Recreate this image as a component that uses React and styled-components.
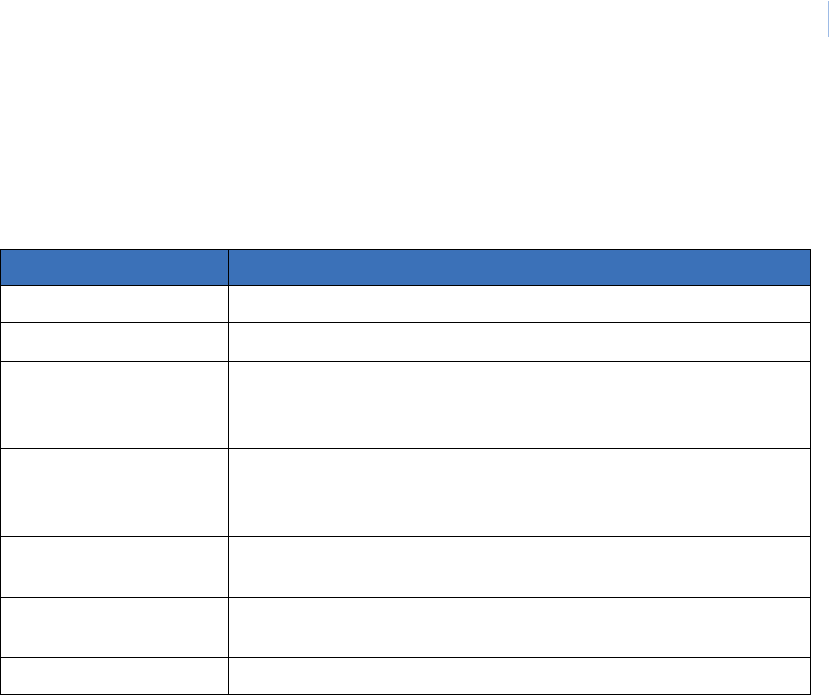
import React from "react";
import styled, { createGlobalStyle } from "styled-components";

const Global = createGlobalStyle`
  html, body { margin: 0; padding: 0; background: #ffffff; }
  body { font-family: "Liberation Sans", Arial, sans-serif; font-size: 14px; color: #000; }
`;

const Page = styled.div`
  display: flex;
  justify-content: space-between;
  align-items: flex-start;
  width: 829px;
  height: 696px;
  overflow: hidden;
`;

const Main = styled.main`
  width: 811px;
  padding-top: 249px;
`;

const Rail = styled.div`
  width: 1px;
  height: 36px;
  margin-top: 1px;
  background: #9dbbe6;
`;

const Table = styled.table`
  width: 811px;
  border-collapse: collapse;
  table-layout: fixed;
`;

const HeadCell = styled.th`
  background: #3b71b8;
  border: 1px solid #000;
  height: ${(p) => p.$h}px;
  padding: 0;
`;

const Cell = styled.td`
  border: 1px solid #000;
  height: ${(p) => p.$h}px;
  padding: 0;
  vertical-align: top;
`;

const rows = [36, 38, 86, 87, 60, 59, 36];

export default function App() {
  return (
    <>
      <Global />
      <Page>
        <Main>
          <Table>
            <colgroup>
              <col style={{ width: 228 }} />
              <col />
            </colgroup>
            <thead>
              <tr>
                <HeadCell $h={35} />
                <HeadCell $h={35} />
              </tr>
            </thead>
            <tbody>
              {rows.map((h, i) => (
                <tr key={i}>
                  <Cell $h={h} />
                  <Cell $h={h} />
                </tr>
              ))}
            </tbody>
          </Table>
        </Main>
        <Rail />
      </Page>
    </>
  );
}
